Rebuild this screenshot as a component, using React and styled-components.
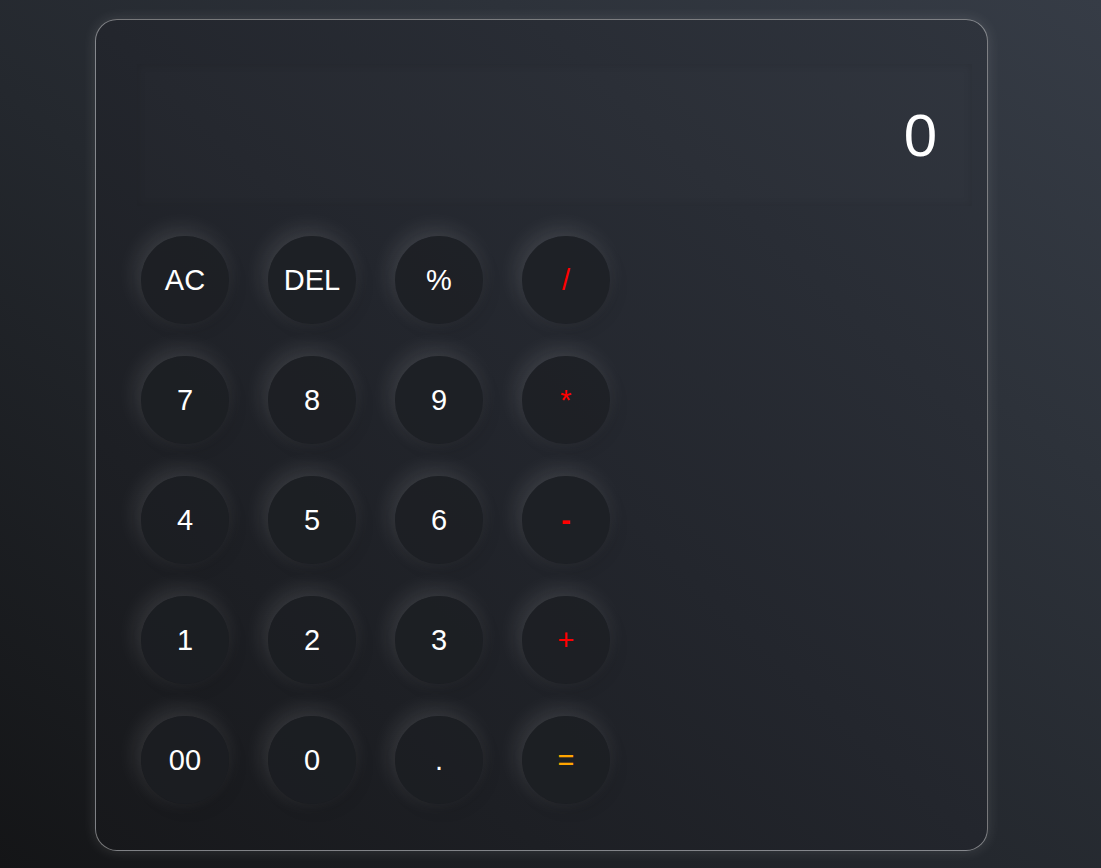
import React, { useState } from "react";
import styled, { createGlobalStyle } from "styled-components";

const GlobalStyle = createGlobalStyle`
  html, body {
    margin: 0;
    padding: 0;
  }
  body {
    min-height: 868px;
    font-family: "Liberation Sans", Arial, sans-serif;
    background: linear-gradient(to top right, #141517 0%, #24282e 45%, #363c46 100%);
    overflow: hidden;
  }
`;

const Page = styled.div`
  padding: 19px 0 0 95px;
`;

const Card = styled.div`
  width: 891px;
  height: 830px;
  box-sizing: content-box;
  border: 1px solid rgba(255, 255, 255, 0.42);
  border-radius: 22px;
  background: linear-gradient(to top right, #17181b 0%, #23262d 50%, #2f343d 100%);
  box-shadow: 0 0 14px rgba(255, 255, 255, 0.12);
  display: flex;
  flex-direction: column;
`;

const Display = styled.div`
  margin: 44px 15px 0 41px;
  height: 142px;
  display: flex;
  align-items: center;
  justify-content: flex-end;
  padding-right: 35px;
  color: #fff;
  font-size: 60px;
  background: rgba(255, 255, 255, 0.012);
  box-shadow: inset 0 0 8px rgba(0, 0, 0, 0.12);
`;

const Keys = styled.div`
  margin: 30px 0 0 45px;
  display: grid;
  grid-template-columns: repeat(4, 88px);
  grid-auto-rows: 88px;
  column-gap: 39px;
  row-gap: 32px;
`;

const Key = styled.button`
  width: 88px;
  height: 88px;
  border: none;
  border-radius: 50%;
  background: rgba(28, 30, 35, 0.72);
  color: ${(p) => p.$color || "#fff"};
  font-family: "Liberation Sans", Arial, sans-serif;
  font-size: 29px;
  font-weight: ${(p) => (p.$bold ? 700 : 400)};
  cursor: pointer;
  box-shadow: -4px -6px 22px rgba(255, 255, 255, 0.13),
    4px 5px 16px rgba(0, 0, 0, 0.12);
  padding: 1px 0 0;
`;

const keys = [
  ["AC"], ["DEL"], ["%"], ["/", "#ff0000"],
  ["7"], ["8"], ["9"], ["*", "#ff0000"],
  ["4"], ["5"], ["6"], ["-", "#ff0000", true],
  ["1"], ["2"], ["3"], ["+", "#ff0000"],
  ["00"], ["0"], ["."], ["=", "#ffa500"],
];

export default function App() {
  const [value] = useState("0");
  return (
    <>
      <GlobalStyle />
      <Page>
        <Card>
          <Display>{value}</Display>
          <Keys>
            {keys.map(([label, color, bold]) => (
              <Key key={label} $color={color} $bold={bold}>
                {label}
              </Key>
            ))}
          </Keys>
        </Card>
      </Page>
    </>
  );
}
